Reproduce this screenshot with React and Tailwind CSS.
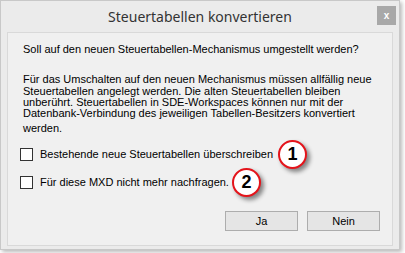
import { useState } from "react";

const ui = { fontFamily: '"Liberation Sans", Arial, sans-serif' };

export default function App() {
  const [overwrite, setOverwrite] = useState(false);
  const [noAsk, setNoAsk] = useState(false);

  return (
    <div className="h-[253px] w-[405px] bg-white" style={ui}>
      <div className="flex h-[250px] w-[400px] flex-col border border-[#c8c8c8] bg-[#ebebeb] shadow-[2px_2px_4px_rgba(0,0,0,0.28)]">
        <div className="relative flex h-[31px] shrink-0 items-center justify-center">
          <span className="text-[14px] text-[#333]" style={{ fontFamily: '"Noto Sans", "Open Sans", sans-serif' }}>
            Steuertabellen konvertieren
          </span>
          <button className="absolute right-[3px] top-[5px] flex h-[19px] w-[19px] items-center justify-center bg-[#a8a8a8] text-[10px] font-bold leading-none text-white">
            x
          </button>
        </div>

        <div className="mx-[6px] flex h-[214px] flex-col border border-[#d9d9d9] bg-[#f0f0f0] pl-[15px] pr-[12px] pt-[10px] text-[11px] leading-[13px] text-black">
          <p>Soll auf den neuen Steuertabellen-Mechanismus umgestellt werden?</p>

          <div className="mt-[17px] leading-[11px]">
            <p className="leading-[13px]">Für das Umschalten auf den neuen Mechanismus müssen allfällig neue</p>
            <p>Steuertabellen angelegt werden. Die alten Steuertabellen bleiben</p>
            <p>unberührt. Steuertabellen in SDE-Workspaces können nur mit der</p>
            <p>Datenbank-Verbindung des jeweiligen Tabellen-Besitzers konvertiert</p>
            <p className="mt-[4px]">werden.</p>
          </div>

          <div className="mt-[6px] -ml-[3px] flex flex-col">
            <CheckRow label="Bestehende neue Steuertabellen überschreiben" badge="1" gap="ml-[5px]" checked={overwrite} onChange={setOverwrite} />
            <CheckRow label="Für diese MXD nicht mehr nachfragen." badge="2" gap="ml-[3px]" checked={noAsk} onChange={setNoAsk} />
          </div>

          <div className="mt-[15px] flex justify-end gap-[9px]">
            <DialogButton>Ja</DialogButton>
            <DialogButton>Nein</DialogButton>
          </div>
        </div>
      </div>
    </div>
  );
}

function CheckRow({ label, badge, gap, checked, onChange }) {
  return (
    <label className="flex h-[28px] items-center">
      <span
        onClick={() => onChange(!checked)}
        className="flex h-[13px] w-[13px] shrink-0 items-center justify-center border border-[#333] bg-white text-[10px] leading-none"
      >
        {checked ? "✓" : ""}
      </span>
      <span className="ml-[7px]">{label}</span>
      <Badge className={gap}>{badge}</Badge>
    </label>
  );
}

function Badge({ children, className }) {
  return (
    <span
      className={
        "flex h-[29px] w-[29px] shrink-0 items-center justify-center rounded-full border-[2.5px] border-[#e4141b] bg-white text-[18px] font-bold leading-none text-black shadow-[3px_3px_4px_rgba(0,0,0,0.45)] " +
        className
      }
    >
      {children}
    </span>
  );
}

function DialogButton({ children }) {
  return (
    <button className="h-[20px] w-[73px] border border-[#adadad] bg-[#e5e5e5] text-[11px] leading-none text-black">
      {children}
    </button>
  );
}
